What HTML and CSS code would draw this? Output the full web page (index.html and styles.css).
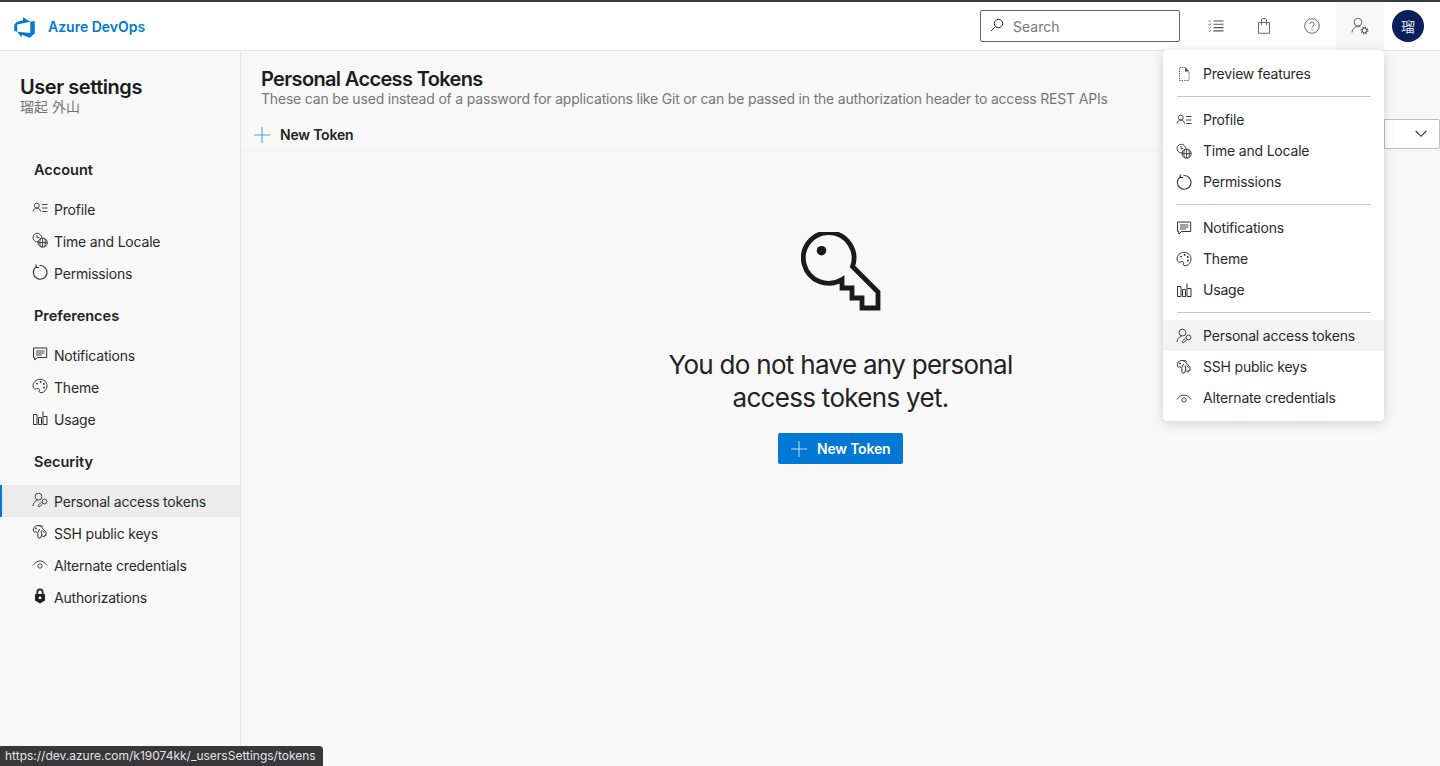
FILE: index.html
```html
<!DOCTYPE html>
<html lang="en">
<head>
<meta charset="utf-8">
<title>Personal Access Tokens</title>
<link rel="stylesheet" href="styles.css">
</head>
<body>
<svg class="defs" width="0" height="0" aria-hidden="true">
  <symbol id="i-preview" viewBox="0 0 16 16"><path d="M3.5 1.5h6l3.5 3.5v9.5h-9.5z" fill="none" stroke="#555" stroke-dasharray="1.3 1.1"/><path d="M9 1.5l4 4H9z" fill="#444"/></symbol>
  <symbol id="i-profile" viewBox="0 0 16 16"><circle cx="4.8" cy="5.6" r="2.5" fill="none" stroke="#444"/><path d="M1 11.5c.3-2.2 1.8-3.4 3.8-3.4s3.5 1.2 3.8 3.4M10 4.5h5.5M10 8h5.5M10 11.5h5.5" fill="none" stroke="#444"/></symbol>
  <symbol id="i-time" viewBox="0 0 16 16"><path d="M6.5 9.7A4.3 4.3 0 1 1 9.6 5.6" fill="none" stroke="#444"/><path d="M5 3v2.6h2.3" fill="none" stroke="#444"/><circle cx="10.6" cy="10.6" r="4.6" fill="none" stroke="#333"/><path d="M6 10.6h9.2M10.6 6v9.2M8.6 6.5c-1 2.6-1 5.6 0 8.2M12.6 6.5c1 2.6 1 5.6 0 8.2" fill="none" stroke="#333" stroke-width=".9"/></symbol>
  <symbol id="i-perm" viewBox="0 0 16 16"><path d="M4.6 2.6a6.8 6.8 0 1 0 3-1" fill="none" stroke="#333" stroke-width="1.1"/><path d="M4.2.5v3h3" fill="none" stroke="#333" stroke-width="1.1"/></symbol>
  <symbol id="i-notif" viewBox="0 0 16 16"><path d="M1.5 2h13.2v9.5H5.5L2.8 14v-2.5H1.5z" fill="none" stroke="#333"/><path d="M4 5h8.5M4 7h8.5M4 9h6" fill="none" stroke="#333" stroke-width=".9"/></symbol>
  <symbol id="i-theme" viewBox="0 0 16 16"><path d="M8 1.300c3.900 0 7 2.900 7 6.600 0 3.800-3 6.800-6 6.800-1.500 0-2-1-1.700-2 .4-1.200 0-2.200-1.300-2.200-.9 0-1.500.6-2.500.6C2 11.100 1 9.500 1 7.900 1 4.200 4.100 1.300 8 1.300z" fill="none" stroke="#333"/><circle cx="5" cy="5.600" r=".95" fill="#333"/><circle cx="8.600" cy="4" r=".95" fill="#333"/><circle cx="11.800" cy="6" r=".95" fill="#333"/><circle cx="12" cy="9.500" r=".95" fill="#333"/></symbol>
  <symbol id="i-usage" viewBox="0 0 16 16"><path d="M1.500 4.500h3.500v10H1.500zM6.500 7.500h3v7h-3zM11 1.500v13h4V6.500h-4" fill="none" stroke="#333"/></symbol>
  <symbol id="i-pat" viewBox="0 0 16 16"><circle cx="6.500" cy="4.600" r="3.400" fill="none" stroke="#444"/><path d="M1 14c.2-3 2-5 4.500-5.700" fill="none" stroke="#444"/><circle cx="12.500" cy="9.500" r="2.400" fill="none" stroke="#444"/><path d="M11 11.300l-3.200 3.300h-1.500v-1.500l3.300-3" fill="none" stroke="#444"/></symbol>
  <symbol id="i-ssh" viewBox="0 0 16 16"><path d="M1.500 7C.7 4.200 3 1.500 6 1.500c1.500 0 2.500.5 3.300 1.500l4.700 5.200v3.300h-1.500v1.200h-1.500l-1.500-1.500-.6 2.300-2 .9-1-1.400V9.200L3.800 7.600 2.700 8.400z" fill="none" stroke="#333"/><circle cx="4" cy="4.400" r=".9" fill="#333"/><path d="M7 1.800c1.800-.6 3.300 0 4 1.300M10.500 6.500l2 2.200M7.500 5l-1.500 3.500M9 6.500l1 5" fill="none" stroke="#333"/></symbol>
  <symbol id="i-alt" viewBox="0 0 16 16"><path d="M1 9.500C3 6.300 5.300 5 8 5s5 1.300 7 4.500" fill="none" stroke="#444"/><circle cx="8" cy="10" r="2.200" fill="none" stroke="#444"/></symbol>
  <symbol id="i-auth" viewBox="0 0 16 16"><path d="M3 6h10v6.500l-5 3-5-3z" fill="#222"/><path d="M5.300 6.500V4a2.700 2.700 0 0 1 5.400 0v2.500" fill="none" stroke="#222" stroke-width="1.700"/><circle cx="8" cy="9.800" r="1.400" fill="#fff"/></symbol>
  <symbol id="i-plus" viewBox="0 0 16 16"><path d="M8 0v16M0 8h16" fill="none" stroke="currentColor" stroke-width="1.100"/></symbol>
</svg>

<div class="app">
  <header class="topbar">
    <svg class="logo" viewBox="0 0 18 18"><path d="M17 4v9.740l-4 3.280-6.200-2.260V17l-3.510-4.590 10.230.8V4.440zm-3.410.49L7.850 1v2.290L2.580 4.840 1 6.870v4.610l2.260 1V6.570z"/></svg>
    <span class="brand">Azure DevOps</span>
    <div class="search">
      <svg class="search-icon" viewBox="0 0 16 16"><circle cx="9.700" cy="6.300" r="4.800" fill="none" stroke="#222" stroke-width="1.100"/><path d="M6.200 9.800L1 15" stroke="#222" stroke-width="1.100"/></svg>
      <span>Search</span>
    </div>
    <div class="tool">
      <svg class="tool-icon" viewBox="0 0 16 16"><path d="M5.500 3h10M5.500 6.300h10M5.500 9.600h10M5.500 12.900h10" stroke="#555" stroke-width="1.100"/><path d="M.6 2.500l1 1 1.500-1.800M.6 6l1 1 1.500-1.800M.6 9.400l1 1 1.500-1.800M.6 12.700l1 1 1.500-1.800" fill="none" stroke="#777" stroke-width=".9"/></svg>
    </div>
    <div class="tool">
      <svg class="tool-icon" viewBox="0 0 16 16"><path d="M2.500 4.500h11v10.800h-11zM5.500 4.500V2q0-1.300 1.300-1.300h2.400q1.300 0 1.300 1.300v2.500M5.500 4.500v2.500M10.500 4.500v2.500" fill="none" stroke="#666"/></svg>
    </div>
    <div class="tool">
      <svg class="tool-icon" viewBox="0 0 16 16"><circle cx="8" cy="8" r="7.300" fill="none" stroke="#666"/><path d="M5.900 6.200c0-1.300.9-2.100 2.100-2.100s2.100.8 2.100 2c0 1.800-2.100 1.700-2.100 3.700" fill="none" stroke="#666"/><circle cx="8" cy="11.800" r=".7" fill="#666"/></svg>
    </div>
    <div class="tool tool-active">
      <svg class="tool-icon" viewBox="0 0 18 18"><circle cx="7" cy="5.200" r="3.900" fill="none" stroke="#666"/><path d="M1 15.500c.3-3.500 2.800-6 6-6 .9 0 1.700.2 2.400.5" fill="none" stroke="#666"/><circle cx="13.500" cy="13.500" r="2.300" fill="none" stroke="#555"/><circle cx="13.500" cy="13.500" r="3.300" fill="none" stroke="#555" stroke-width="1.300" stroke-dasharray="1.300 1.300"/></svg>
    </div>
    <div class="avatar">瑠</div>
  </header>

  <div class="body">
    <aside class="sidebar">
      <div class="side-head">
        <h2 class="side-title">User settings</h2>
        <div class="side-user">瑠起 外山</div>
      </div>
      <h3 class="group">Account</h3>
      <ul class="nav">
        <li class="nav-item"><svg class="ico"><use href="#i-profile"/></svg>Profile</li>
        <li class="nav-item"><svg class="ico"><use href="#i-time"/></svg>Time and Locale</li>
        <li class="nav-item"><svg class="ico"><use href="#i-perm"/></svg>Permissions</li>
      </ul>
      <h3 class="group">Preferences</h3>
      <ul class="nav">
        <li class="nav-item"><svg class="ico"><use href="#i-notif"/></svg>Notifications</li>
        <li class="nav-item"><svg class="ico"><use href="#i-theme"/></svg>Theme</li>
        <li class="nav-item"><svg class="ico"><use href="#i-usage"/></svg>Usage</li>
      </ul>
      <h3 class="group">Security</h3>
      <ul class="nav">
        <li class="nav-item nav-selected"><svg class="ico"><use href="#i-pat"/></svg>Personal access tokens</li>
        <li class="nav-item"><svg class="ico"><use href="#i-ssh"/></svg>SSH public keys</li>
        <li class="nav-item"><svg class="ico"><use href="#i-alt"/></svg>Alternate credentials</li>
        <li class="nav-item"><svg class="ico"><use href="#i-auth"/></svg>Authorizations</li>
      </ul>
    </aside>

    <main class="main">
      <div class="page-head">
        <h1 class="page-title">Personal Access Tokens</h1>
        <p class="page-sub">These can be used instead of a password for applications like Git or can be passed in the authorization header to access REST APIs</p>
      </div>
      <div class="toolbar">
        <svg class="plus plus-light"><use href="#i-plus"/></svg>
        <span class="toolbar-label">New Token</span>
        <div class="filter">
          <svg class="chev" viewBox="0 0 12 8"><path d="M.7 1l5.300 5.300L11.300 1" fill="none" stroke="#333" stroke-width="1.100"/></svg>
        </div>
      </div>
      <section class="empty">
        <svg class="key" viewBox="20 12 80 80">
          <path d="M71.500 46.500L97 72v16H81V78H71V68H61V59.500A25.300 25.300 0 1 1 71.500 46.500Z" fill="none" stroke="#1a1a1a" stroke-width="4.800"/>
          <circle cx="40.500" cy="30.700" r="4.800" fill="#1a1a1a"/>
        </svg>
        <h2 class="empty-title">You do not have any personal access tokens yet.</h2>
        <button class="primary"><svg class="plus"><use href="#i-plus"/></svg>New Token</button>
      </section>
    </main>
  </div>
</div>

<nav class="menu">
  <div class="menu-item"><svg class="ico"><use href="#i-preview"/></svg>Preview features</div>
  <div class="menu-sep"></div>
  <div class="menu-item"><svg class="ico"><use href="#i-profile"/></svg>Profile</div>
  <div class="menu-item"><svg class="ico"><use href="#i-time"/></svg>Time and Locale</div>
  <div class="menu-item"><svg class="ico"><use href="#i-perm"/></svg>Permissions</div>
  <div class="menu-sep"></div>
  <div class="menu-item"><svg class="ico"><use href="#i-notif"/></svg>Notifications</div>
  <div class="menu-item"><svg class="ico"><use href="#i-theme"/></svg>Theme</div>
  <div class="menu-item"><svg class="ico"><use href="#i-usage"/></svg>Usage</div>
  <div class="menu-sep"></div>
  <div class="menu-item menu-hover"><svg class="ico"><use href="#i-pat"/></svg>Personal access tokens</div>
  <div class="menu-item"><svg class="ico"><use href="#i-ssh"/></svg>SSH public keys</div>
  <div class="menu-item"><svg class="ico"><use href="#i-alt"/></svg>Alternate credentials</div>
</nav>

<div class="status">https://dev.azure.com/k19074kk/_usersSettings/tokens</div>
</body>
</html>
```

FILE: styles.css
```css
* { box-sizing: border-box; }
html, body { margin: 0; height: 100%; overflow: hidden; }
body {
  font-family: Inter, "Noto Sans CJK JP", sans-serif;
  font-size: 14px;
  letter-spacing: -.2px;
  color: #202020;
  background: #f8f8f8;
  position: relative;
}
.defs { position: absolute; }
h1, h2, h3, p, ul { margin: 0; padding: 0; }
ul { list-style: none; }

.app { display: flex; flex-direction: column; height: 766px; }

.topbar {
  display: flex;
  align-items: center;
  height: 51px;
  flex: none;
  background: #fff;
  border-top: 2px solid #3c3c3f;
  border-bottom: 1px solid #e6e6e6;
  padding: 0 16px 0 13px;
}
.logo { width: 23px; height: 23px; fill: #0078d4; margin-right: 12px; margin-top: 2px; }
.brand { font-size: 14px; font-weight: 600; letter-spacing: 0; color: #0078d4; margin-right: auto; }
.search {
  display: flex;
  align-items: center;
  width: 200px;
  height: 32px;
  border: 1px solid #666;
  border-radius: 2px;
  padding-left: 9px;
  margin-right: 12px;
  color: #767676;
  letter-spacing: 0;
}
.search-icon { width: 14px; height: 14px; margin-right: 9px; margin-top: -2px; }
.tool { width: 48px; height: 48px; display: flex; align-items: center; justify-content: center; }
.tool-active { background: #f8f8f8; }
.tool-icon { width: 16px; height: 16px; }
.tool-active .tool-icon { width: 18px; height: 18px; }
.avatar {
  width: 32px;
  height: 32px;
  border-radius: 50%;
  background: #0a1f5c;
  color: #dfe3ee;
  font-size: 14px;
  display: flex;
  align-items: center;
  justify-content: center;
  margin-left: 8px;
}

.body { display: flex; flex: 1; min-height: 0; }
.sidebar { width: 241px; flex: none; border-right: 1px solid #e6e6e6; background: #f8f8f8; }
.side-head { height: 103px; padding: 24px 0 0 20px; }
.side-title { font-size: 20px; font-weight: 600; line-height: 24px; letter-spacing: -.45px; color: #1c1c1c; }
.side-user { font-size: 14px; line-height: 16px; letter-spacing: 0; color: #767676; }
.group { font-size: 14.500px; font-weight: 600; height: 32px; line-height: 32px; letter-spacing: 0; padding-left: 34px; color: #222; margin-bottom: 7px; }
.nav { margin-bottom: 11px; }
.nav-item { display: flex; align-items: center; height: 32px; padding-left: 32px; color: #2a2a2a; }
.nav-item .ico { margin: -3px 6px 0 0; }
.nav-selected { background: #ececec; box-shadow: inset 2px 0 0 #0078d4; }
.ico { width: 16px; height: 16px; flex: none; }

.main { flex: 1; min-width: 0; }
.page-head { padding: 16px 0 0 20px; height: 68px; }
.page-title { font-size: 20px; font-weight: 600; line-height: 24px; letter-spacing: -.65px; color: #1c1c1c; }
.page-sub { font-size: 14px; line-height: 15px; letter-spacing: -.19px; color: #767676; }
.toolbar {
  display: flex;
  align-items: center;
  height: 32px;
  padding-left: 13px;
  border-bottom: 1px solid #f2f2f2;
  font-weight: 600;
}
.toolbar-label { margin-left: 10px; margin-right: auto; color: #222; }
.plus { width: 16px; height: 16px; flex: none; }
.plus-light { color: #4aa3e6; }
.filter {
  width: 56px;
  height: 30px;
  margin-bottom: 2px;
  border: 1px solid #bdbdbd;
  border-radius: 0 2px 2px 0;
  background: #fff;
  display: flex;
  align-items: center;
  justify-content: flex-end;
  padding-right: 12px;
}
.chev { width: 12px; height: 8px; }

.empty { display: flex; flex-direction: column; align-items: center; padding-top: 81px; }
.key { width: 80px; height: 80px; }
.empty-title {
  width: 380px;
  margin-top: 36px;
  font-size: 26px;
  line-height: 33px;
  font-weight: 400;
  letter-spacing: -.7px;
  text-align: center;
  color: #222;
}
.primary {
  display: flex;
  align-items: center;
  gap: 10px;
  width: 125px;
  height: 31px;
  margin-top: 19px;
  padding: 0 0 0 13px;
  border: 0;
  border-radius: 2px;
  background: #0078d4;
  color: #fff;
  font: 600 14px Inter, sans-serif;
  letter-spacing: -.2px;
}
.primary .plus { color: #b5d8f3; }

.menu {
  position: absolute;
  left: 1163px;
  top: 50px;
  width: 221px;
  height: 371px;
  padding-top: 8px;
  background: #fff;
  border-radius: 4px;
  box-shadow: 0 2px 12px rgba(0, 0, 0, .16);
}
.menu-item { display: flex; align-items: center; height: 31px; padding-left: 13px; color: #2a2a2a; }
.menu-item .ico { margin-right: 11px; }
.menu-hover { background: #f4f4f4; }
.menu-sep { height: 1px; margin: 7px 13px 7px 14px; background: #c8c8c8; }

.status {
  position: absolute;
  left: 0;
  bottom: 0;
  width: 323px;
  height: 20px;
  padding-left: 5px;
  background: #38383b;
  border-radius: 0 4px 0 0;
  color: #e4e4e4;
  font-size: 12px;
  letter-spacing: 0;
  line-height: 20px;
  white-space: nowrap;
}
```
